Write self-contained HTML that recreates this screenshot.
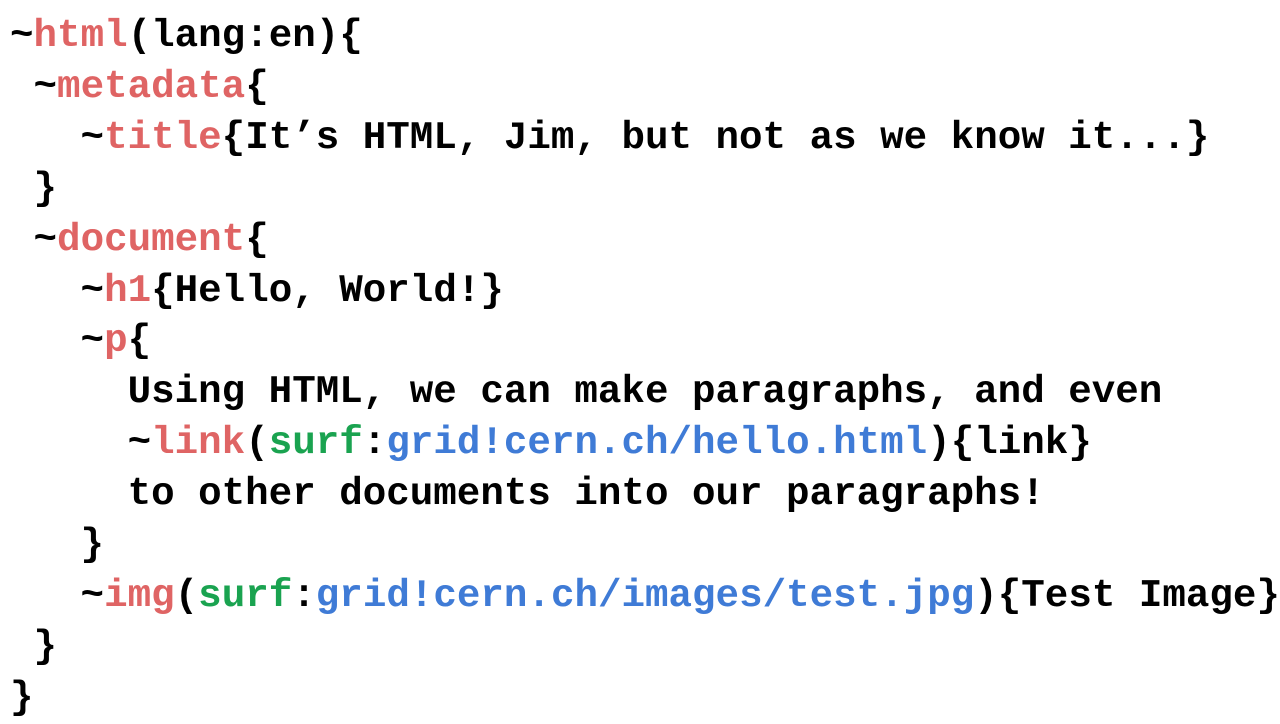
<!DOCTYPE html>
<html lang="en"><head><meta charset="utf-8"><style>
html,body{margin:0;padding:0;background:#fff;width:1280px;height:720px;overflow:hidden}
pre{margin:0;position:absolute;left:10px;top:11px;font-family:"Liberation Mono",monospace;font-weight:bold;font-size:39.2px;line-height:50.9px;color:#000}
.r{color:#df6464}.g{color:#1aa350}.b{color:#3f7bd6}
</style></head><body><pre>~<span class="r">html</span>(lang:en){
 ~<span class="r">metadata</span>{
   ~<span class="r">title</span>{It’s HTML, Jim, but not as we know it...}
 }
 ~<span class="r">document</span>{
   ~<span class="r">h1</span>{Hello, World!}
   ~<span class="r">p</span>{
     Using HTML, we can make paragraphs, and even
     ~<span class="r">link</span>(<span class="g">surf</span>:<span class="b">grid!cern.ch/hello.html</span>){link}
     to other documents into our paragraphs!
   }
   ~<span class="r">img</span>(<span class="g">surf</span>:<span class="b">grid!cern.ch/images/test.jpg</span>){Test Image}
 }
}</pre></body></html>
